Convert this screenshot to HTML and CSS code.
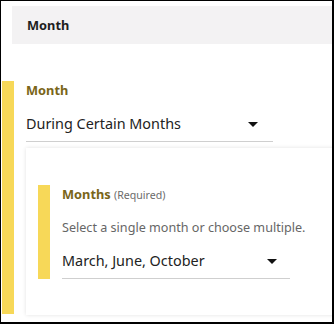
FILE: index.html
```html
<!DOCTYPE html>
<html>
<head>
<meta charset="utf-8">
<link rel="stylesheet" href="styles.css">
</head>
<body>
<div class="frame">
  <div class="header">Month</div>
  <div class="section">
    <div class="label">Month</div>
    <div class="select outer-select">
      <span class="value">During Certain Months</span>
      <span class="caret"></span>
    </div>
    <div class="card">
      <div class="inner">
        <div class="label">Months <span class="req">(Required)</span></div>
        <div class="help">Select a single month or choose multiple.</div>
        <div class="select inner-select">
          <span class="value">March, June, October</span>
          <span class="caret"></span>
        </div>
      </div>
    </div>
  </div>
</div>
</body>
</html>
```
FILE: styles.css
```css
* { box-sizing: border-box; }
html, body { margin: 0; padding: 0; background: #fff; }
body { font-family: "Noto Sans", "Open Sans", sans-serif; color: #222; }
.frame {
  width: 334px;
  height: 324px;
  border-style: solid;
  border-color: #000;
  border-width: 1px 2px 2px 1px;
  overflow: hidden;
}
.header {
  margin: 5px 0 0 11px;
  height: 38px;
  background: #f3f2f3;
  display: flex;
  align-items: center;
  padding-left: 15px;
  font-weight: 700;
  font-size: 12.8px;
  color: #1e1e1e;
}
.section {
  margin: 37px 0 0 1px;
  border-left: 12px solid #f7d858;
  padding-left: 12px;
  height: 233px;
}
.label {
  font-size: 12.8px;
  line-height: 18px;
  font-weight: 700;
  color: #7a6518;
}
.req {
  font-size: 10.6px;
  font-weight: 400;
  color: #6b6b6b;
}
.select {
  display: flex;
  align-items: center;
  justify-content: space-between;
  font-size: 14.4px;
  line-height: 20px;
  padding-bottom: 7px;
  border-bottom: 1px solid #cfcfcf;
  color: #222;
}
.outer-select {
  margin-top: 15px;
  width: 247px;
  padding-right: 15px;
}
.inner-select {
  margin-top: 14px;
  width: 228px;
  padding-right: 13px;
}
.caret {
  width: 0;
  height: 0;
  border-left: 5px solid transparent;
  border-right: 5px solid transparent;
  border-top: 5px solid #111;
}
.card {
  margin-top: 6px;
  margin-right: -20px;
  background: #fff;
  box-shadow: 0 0 4px rgba(0,0,0,0.12);
  padding: 37px 0 36px 12px;
}
.inner {
  border-left: 12px solid #f7d858;
  padding-left: 12px;
}
.help {
  margin-top: 15px;
  font-size: 12.6px;
  line-height: 18px;
  color: #666;
}
```
